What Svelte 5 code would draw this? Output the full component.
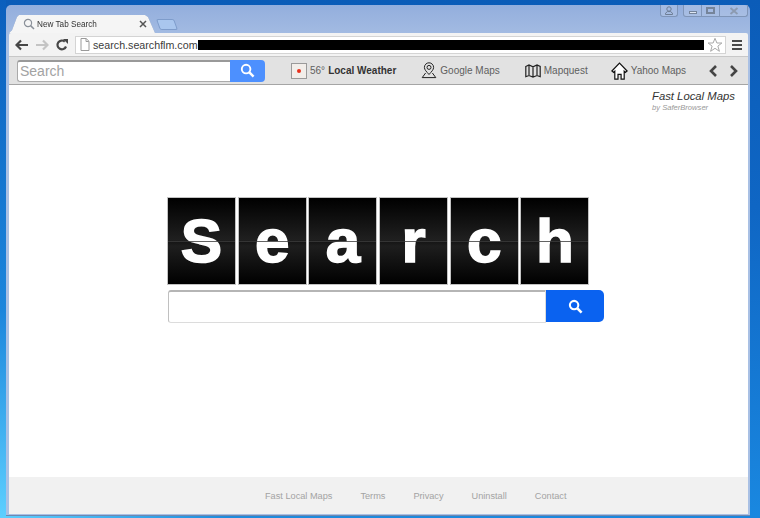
<script>
	const letters = ['S', 'e', 'a', 'r', 'c', 'h'];
	const footerLinks = ['Fast Local Maps', 'Terms', 'Privacy', 'Uninstall', 'Contact'];
</script>

<div class="desktop">
	<div class="window">
		<div class="titlebar">
			<div class="tab-wrap">
				<div class="tab">
					<svg class="tab-icon" viewBox="0 0 12 12" width="12" height="12">
						<circle cx="5" cy="5" r="3.6" fill="none" stroke="#8a9099" stroke-width="1.2" />
						<path d="M7.6 7.6 11 11" stroke="#8a9099" stroke-width="1.5" />
					</svg>
					<span class="tab-title">New Tab Search</span>
					<svg class="tab-close" viewBox="0 0 8 8" width="8" height="8">
						<path d="M1 1 7 7M7 1 1 7" stroke="#555" stroke-width="1.5" />
					</svg>
				</div>
			</div>
			<div class="new-tab"></div>
			<div class="spacer"></div>
			<div class="win-controls">
				<div class="user-btn">
					<svg viewBox="0 0 10 10" width="10" height="10">
						<circle cx="5" cy="3" r="2.2" fill="none" stroke="#6d7d94" />
						<path d="M1.5 8.5h7V7.2L6.6 5.6H3.4L1.500 7.200z" fill="none" stroke="#6d7d94" />
					</svg>
				</div>
				<div class="caption-btns">
					<div class="cap cap-min"><span class="min-bar"></span></div>
					<div class="cap cap-max"><span class="max-box"></span></div>
					<div class="cap cap-close">
						<svg viewBox="0 0 10 8" width="10" height="8">
							<path d="M1.5 1 8.500 7M8.500 1 1.500 7" stroke="#8c9ab0" stroke-width="1.8" />
						</svg>
					</div>
				</div>
			</div>
		</div>

		<div class="toolbar">
			<svg viewBox="0 0 14 12" width="14" height="12">
				<path d="M6 1.500 1.500 6 6 10.500M2 6h11" fill="none" stroke="#474747" stroke-width="2.200" />
			</svg>
			<svg viewBox="0 0 14 12" width="14" height="12">
				<path d="M8 1.500 12.500 6 8 10.500M12 6H1" fill="none" stroke="#c4c4c4" stroke-width="2.200" />
			</svg>
			<svg viewBox="0 0 14 14" width="14" height="14">
				<path d="M11 8.500A4.400 4.400 0 1 1 9.800 3.600" fill="none" stroke="#474747" stroke-width="2.200" />
				<path d="M8 1h5v5z" fill="#474747" />
			</svg>
			<div class="omnibox">
				<svg viewBox="0 0 10 13" width="10" height="13">
					<path d="M1 .5h5.200L9 3.300v9.200H1z" fill="#fff" stroke="#9a9a9a" />
					<path d="M6 .8v2.700h2.800" fill="none" stroke="#9a9a9a" />
				</svg>
				<span class="url">search.searchflm.com</span>
				<div class="redacted"></div>
				<svg class="star" viewBox="0 0 16 16" width="16" height="16">
					<path d="M8 1.300 9.900 6h5l-4 3.100 1.500 5.200L8 11.300l-4.400 3 1.500-5.200-4-3.100h5z" fill="#fff" stroke="#a8a8a8" />
				</svg>
			</div>
			<div class="menu"><span></span><span></span><span></span></div>
		</div>

		<div class="bookmarks">
			<div class="bar-search">
				<div class="bar-input">Search</div>
				<div class="bar-btn">
					<svg viewBox="0 0 16 16" width="15" height="15">
						<circle cx="6.500" cy="6.500" r="4.600" fill="none" stroke="#fff" stroke-width="2" />
						<path d="M10 10 14.500 14.500" stroke="#fff" stroke-width="2.600" />
					</svg>
				</div>
			</div>
			<div class="weather">
				<div class="weather-icon"><span></span></div>
				<span class="temp">56°</span>
				<b>Local Weather</b>
			</div>
			<div class="link link-google">
				<svg viewBox="0 0 16 17" width="16" height="17">
					<path d="M8 12.500C5.500 9.600 3.400 7.800 3.400 5.400a4.600 4.600 0 0 1 9.200 0C12.600 7.800 10.500 9.600 8 12.500z" fill="none" stroke="#222" />
					<circle cx="8" cy="5.400" r="2" fill="none" stroke="#222" />
					<path d="M4.600 11 1.200 15.600h13.600L11.400 11" fill="none" stroke="#222" />
				</svg>
				Google Maps
			</div>
			<div class="link link-mapquest">
				<svg viewBox="0 0 16 14" width="16" height="14">
					<path d="M.8 2.500 4 1l4 1.800L12 1l3.200 1.500v10.200L12 11.400l-4 1.800-4-1.800-3.200 1.300zM4 1v10.400M8 2.800v10.400M12 1v10.400" fill="none" stroke="#222" stroke-width="1.200" />
				</svg>
				Mapquest
			</div>
			<div class="link link-yahoo">
				<svg viewBox="0 0 17 18" width="17" height="18">
					<path d="M.9 9 8.500 1.200 16.100 9l-1.700 1.400-1.200-1.200v8h-3.100v-4.800H7v4.800H3.800v-8L2.600 10.400z" fill="#fff" stroke="#111" stroke-width="1.200" />
				</svg>
				Yahoo Maps
			</div>
			<div class="arrows">
				<svg viewBox="0 0 10 12" width="10" height="12">
					<path d="M8 1 3 6l5 5" fill="none" stroke="#444" stroke-width="2.600" />
				</svg>
				<svg viewBox="0 0 10 12" width="10" height="12">
					<path d="M2 1l5 5-5 5" fill="none" stroke="#444" stroke-width="2.600" />
				</svg>
			</div>
		</div>

		<main class="content">
			<div class="brand">
				<div class="brand-name">Fast Local Maps</div>
				<div class="brand-by">by SaferBrowser</div>
			</div>
			<div class="center">
				<div class="flip-row">
					{#each letters as letter}
						<div class="flip">{letter}<span class="seam"></span></div>
					{/each}
				</div>
				<div class="search-row">
					<div class="search-input"></div>
					<div class="search-btn">
						<svg viewBox="0 0 16 16" width="15" height="15">
							<circle cx="6.500" cy="6.500" r="4.500" fill="none" stroke="#fff" stroke-width="2.200" />
							<path d="M10 10 14.500 14.500" stroke="#fff" stroke-width="2.800" />
						</svg>
					</div>
				</div>
			</div>
			<footer class="footer">
				{#each footerLinks as item}
					<span>{item}</span>
				{/each}
			</footer>
		</main>
	</div>
</div>

<style>
	:global(body) {
		margin: 0;
	}

	.desktop {
		width: 760px;
		height: 518px;
		box-sizing: border-box;
		padding: 5px 10px 2px 6px;
		background:
			linear-gradient(180deg, #0b5fbd 0, #1c86dc 60%, #5dcfff 100%) left / 6px 100% no-repeat,
			linear-gradient(90deg, #5dcfff 0, #1f8bdc 30%, #1a86de 100%) bottom / 100% 2px no-repeat,
			linear-gradient(180deg, #0b5cb8 0, #0f66c4 40%, #1a88e0 100%);
		overflow: hidden;
		font-family: "Liberation Sans", Arial, sans-serif;
	}

	.window {
		height: 100%;
		box-sizing: border-box;
		display: flex;
		flex-direction: column;
		padding: 0 2px 1px 3px;
		background: linear-gradient(180deg, #93aedd 0, #a9c0e4 40px, #a9c0e4 100%);
		border-bottom: 1px solid #7088b0;
		border-radius: 5px 5px 0 0;
	}

	.titlebar {
		height: 28px;
		display: flex;
		align-items: flex-end;
		flex: none;
	}

	.tab-wrap {
		flex: none;
		filter: drop-shadow(0 0 0.6px #6b85b3);
	}

	.tab {
		width: 146px;
		height: 18px;
		display: flex;
		align-items: center;
		gap: 2px;
		padding: 0 0 0 14px;
		box-sizing: border-box;
		background: #f5f5f5;
		clip-path: polygon(0 100%, 3px 85%, 8px 2px, 10px 0, 136px 0, 139px 2px, 146px 100%);
		font-size: 8.2px;
		color: #333;
	}

	.tab-icon {
		flex: none;
	}

	.tab-title {
		flex: 1;
		white-space: nowrap;
	}

	.tab-close {
		margin-right: 8px;
	}

	.new-tab {
		width: 16px;
		height: 9px;
		margin: 0 0 3px 3px;
		background: #a9c6ee;
		border: 1px solid #7e9ccb;
		border-radius: 2px;
		transform: skewX(20deg);
	}

	.spacer {
		flex: 1;
	}

	.win-controls {
		align-self: flex-start;
		display: flex;
		gap: 5px;
	}

	.user-btn,
	.caption-btns {
		height: 11px;
		border: 1px solid #7f95b8;
		border-top: none;
		border-radius: 0 0 3px 3px;
		background: rgba(255, 255, 255, 0.15);
		display: flex;
		align-items: center;
		justify-content: center;
	}

	.user-btn {
		width: 16px;
	}

	.caption-btns {
		width: 63px;
	}

	.cap {
		height: 100%;
		display: flex;
		align-items: center;
		justify-content: center;
		border-right: 1px solid #7f95b8;
	}

	.cap-min,
	.cap-max {
		width: 17px;
	}

	.cap-close {
		flex: 1;
		border-right: none;
	}

	.min-bar {
		width: 8px;
		height: 3px;
		border: 1px solid #75849a;
		background: #dfe7f3;
		margin-top: 3px;
		box-sizing: border-box;
	}

	.max-box {
		width: 9px;
		height: 7px;
		border: 2px solid #75849a;
		box-sizing: border-box;
	}

	.toolbar {
		height: 24px;
		flex: none;
		display: flex;
		align-items: center;
		gap: 6px;
		padding: 0 6px;
		background: #f3f3f3;
		border-bottom: 1px solid #c8c8c8;
		box-sizing: border-box;
		border-radius: 2px 2px 0 0;
	}

	.omnibox {
		flex: 1;
		height: 18px;
		display: flex;
		align-items: center;
		padding-left: 4px;
		background: #fff;
		border: 1px solid #d4d4d4;
		box-sizing: border-box;
	}

	.url {
		font-size: 10.7px;
		color: #3c3c3c;
		margin-left: 3px;
		white-space: nowrap;
	}

	.redacted {
		width: 506px;
		height: 10px;
		background: #000;
	}

	.star {
		margin-left: 3px;
	}

	.menu {
		width: 10px;
		display: flex;
		flex-direction: column;
		gap: 2px;
	}

	.menu span {
		height: 2px;
		background: #4a4a4a;
	}

	.bookmarks {
		height: 28px;
		flex: none;
		display: flex;
		align-items: center;
		padding-left: 8px;
		background: #e2e2e2;
		border-bottom: 1px solid #a5a5a5;
		box-sizing: border-box;
		font-size: 10px;
		color: #5f5f5f;
		white-space: nowrap;
	}

	.bar-search {
		display: flex;
		width: 248px;
		height: 22px;
		flex: none;
	}

	.bar-input {
		flex: 1;
		background: #fff;
		border: 1px solid #aaa;
		border-top: 2px solid #999;
		border-right: none;
		border-radius: 3px 0 0 3px;
		box-sizing: border-box;
		padding-left: 2px;
		font-size: 14px;
		line-height: 18px;
		color: #a3a3a3;
	}

	.bar-btn {
		width: 35px;
		background: #4d90fe;
		border-radius: 0 4px 4px 0;
		display: flex;
		align-items: center;
		justify-content: center;
	}

	.weather {
		display: flex;
		align-items: center;
		gap: 3px;
		margin-left: 26px;
		flex: none;
	}

	.weather-icon {
		width: 16px;
		height: 16px;
		box-sizing: border-box;
		border: 1px solid #9a9a9a;
		background: #f2eeea;
		display: flex;
		align-items: center;
		justify-content: center;
	}

	.weather-icon span {
		width: 4px;
		height: 4px;
		border-radius: 50%;
		background: #e8301c;
	}

	.weather b {
		color: #333;
	}

	.link {
		display: flex;
		align-items: center;
		gap: 3px;
		flex: none;
	}

	.link-google {
		margin-left: 25px;
	}

	.link-mapquest {
		margin-left: 25px;
	}

	.link-yahoo {
		margin-left: 23px;
	}

	.arrows {
		display: flex;
		gap: 11px;
		margin-left: 22px;
	}

	.content {
		flex: 1;
		display: flex;
		flex-direction: column;
		background: #fff;
		min-height: 0;
	}

	.brand {
		align-self: flex-end;
		height: 24px;
		padding: 5px 0 0 0;
		margin-right: 14px;
		flex: none;
		width: 82px;
	}

	.brand-name {
		font-style: italic;
		font-size: 11.3px;
		line-height: 13px;
		color: #333;
		white-space: nowrap;
	}

	.brand-by {
		font-style: italic;
		font-size: 7.6px;
		line-height: 9px;
		color: #999;
		white-space: nowrap;
	}

	.center {
		flex: 1;
		padding: 83px 0 0 158px;
	}

	.flip-row {
		display: flex;
		gap: 1.7px;
	}

	.flip {
		position: relative;
		width: 69px;
		height: 88px;
		box-sizing: border-box;
		border: 1px solid #c2c2c2;
		background: linear-gradient(180deg, #000 0, #202020 49%, #151515 51%, #1e1e1e 56%, #000 100%);
		color: #fff;
		font-weight: 700;
		font-size: 62px;
		line-height: 86px;
		text-align: center;
		-webkit-text-stroke: 1.6px #fff;
	}

	.seam {
		position: absolute;
		left: 0;
		right: 0;
		top: 43px;
		height: 1px;
		background: rgba(60, 60, 60, 0.8);
	}

	.search-row {
		display: flex;
		width: 436px;
		height: 33px;
		margin: 5px 0 0 1px;
	}

	.search-input {
		flex: 1;
		background: #fff;
		border: 1px solid #dcdcdc;
		border-top: 2px solid #b5b5b5;
		border-left: 1px solid #c0c0c0;
		border-radius: 3px 0 0 3px;
		box-sizing: border-box;
	}

	.search-btn {
		width: 58px;
		height: 32px;
		background: #0a62f0;
		border-radius: 0 5px 5px 0;
		display: flex;
		align-items: center;
		justify-content: center;
	}

	.footer {
		height: 37px;
		flex: none;
		background: #f1f1f1;
		display: flex;
		align-items: center;
		gap: 28px;
		padding-left: 256px;
		box-sizing: border-box;
		font-size: 9.2px;
		color: #a3a3a3;
	}
</style>
